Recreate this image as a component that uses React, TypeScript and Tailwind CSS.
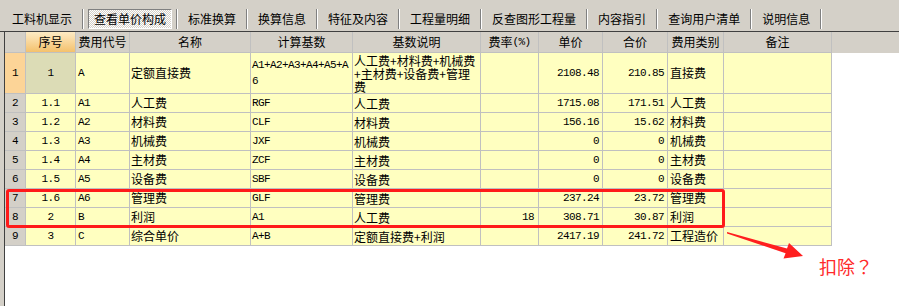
import React from "react";

const cjk = "font-['Noto_Sans_CJK_SC',sans-serif]";
const mono = "font-['Liberation_Mono',monospace] text-[11px] tracking-[-0.6px]";

const tabs = [
  "工料机显示",
  "查看单价构成",
  "标准换算",
  "换算信息",
  "特征及内容",
  "工程量明细",
  "反查图形工程量",
  "内容指引",
  "查询用户清单",
  "说明信息",
];

type Row = {
  seq: string;
  code: string;
  name: string;
  base: string[];
  desc: string[];
  rate: string;
  price: string;
  total: string;
  cat: string;
};

const rows: Row[] = [
  {
    seq: "1",
    code: "A",
    name: "定额直接费",
    base: ["A1+A2+A3+A4+A5+A", "6"],
    desc: ["人工费+材料费+机械费", "+主材费+设备费+管理", "费"],
    rate: "",
    price: "2108.48",
    total: "210.85",
    cat: "直接费",
  },
  { seq: "1.1", code: "A1", name: "人工费", base: ["RGF"], desc: ["人工费"], rate: "", price: "1715.08", total: "171.51", cat: "人工费" },
  { seq: "1.2", code: "A2", name: "材料费", base: ["CLF"], desc: ["材料费"], rate: "", price: "156.16", total: "15.62", cat: "材料费" },
  { seq: "1.3", code: "A3", name: "机械费", base: ["JXF"], desc: ["机械费"], rate: "", price: "0", total: "0", cat: "机械费" },
  { seq: "1.4", code: "A4", name: "主材费", base: ["ZCF"], desc: ["主材费"], rate: "", price: "0", total: "0", cat: "主材费" },
  { seq: "1.5", code: "A5", name: "设备费", base: ["SBF"], desc: ["设备费"], rate: "", price: "0", total: "0", cat: "设备费" },
  { seq: "1.6", code: "A6", name: "管理费", base: ["GLF"], desc: ["管理费"], rate: "", price: "237.24", total: "23.72", cat: "管理费" },
  { seq: "2", code: "B", name: "利润", base: ["A1"], desc: ["人工费"], rate: "18", price: "308.71", total: "30.87", cat: "利润" },
  { seq: "3", code: "C", name: "综合单价", base: ["A+B"], desc: ["定额直接费+利润"], rate: "", price: "2417.19", total: "241.72", cat: "工程造价" },
];

const cols = "grid grid-cols-[21px_50px_54px_121px_102px_128px_58px_64px_65px_56px_108px]";

function Cell({ className = "", children }: { className?: string; children?: React.ReactNode }) {
  return (
    <div className={`flex items-center overflow-hidden whitespace-nowrap border-r border-b border-[#c0c0c0] ${className}`}>
      {children}
    </div>
  );
}

function Toolbar() {
  return (
    <div className={`h-[31px] bg-[#d4d0c8] flex items-start pt-[9px] pl-[2px] text-[12px] text-black ${cjk}`}>
      {tabs.map((t, i) => (
        <React.Fragment key={t}>
          {i === 1 ? (
            <div className="h-[20px] mx-[4px] px-[5px] flex items-center border border-[#808080] border-r-white border-b-white bg-[image:repeating-conic-gradient(#ffffff_0%_25%,#d4d0c8_0%_50%)] bg-[length:2px_2px]">
              {t}
            </div>
          ) : (
            <div className="h-[20px] px-[10px] flex items-center">{t}</div>
          )}
          <div className="h-[20px] w-[2px] border-l border-[#808080] border-r border-r-white" />
        </React.Fragment>
      ))}
    </div>
  );
}

function Header() {
  const heads = ["费用代号", "名称", "计算基数", "基数说明"];
  return (
    <div className={`${cols} h-[21px] bg-[#d4d0c8] text-[12px] ${cjk}`}>
      <Cell />
      <Cell className="justify-center bg-linear-to-b from-[#fdebc4] to-[#f4c16c]">序号</Cell>
      {heads.map((h) => (
        <Cell key={h} className="justify-center">{h}</Cell>
      ))}
      <Cell className="justify-center">
        费率<span className={mono}>(%)</span>
      </Cell>
      {["单价", "合价", "费用类别", "备注"].map((h) => (
        <Cell key={h} className="justify-center">{h}</Cell>
      ))}
    </div>
  );
}

function DataRow({ row, index }: { row: Row; index: number }) {
  const first = index === 0;
  return (
    <div className={`${cols} ${first ? "h-[41px]" : "h-[19px]"} text-[12px] text-black ${cjk}`}>
      <Cell className={`justify-center ${mono} ${first ? "bg-[#fcd497]" : "bg-[#d4d0c8]"}`}>{index + 1}</Cell>
      <Cell className={`justify-center ${mono} ${first ? "bg-[#dcdcb6]" : "bg-[#ffffc0]"}`}>{row.seq}</Cell>
      <Cell className={`pl-[2px] bg-[#ffffc0] ${mono}`}>{row.code}</Cell>
      <Cell className="pl-[1px] bg-[#ffffc0]">{row.name}</Cell>
      <Cell className={`pl-[1px] bg-[#ffffc0] ${mono}`}>
        <div className="leading-[16px]">
          {row.base.map((b) => (
            <div key={b}>{b}</div>
          ))}
        </div>
      </Cell>
      <Cell className="pl-[1px] bg-[#ffffc0]">
        <div className="leading-[13px]">
          {row.desc.map((d) => (
            <div key={d}>{d}</div>
          ))}
        </div>
      </Cell>
      <Cell className={`justify-end pr-[4px] bg-[#ffffc0] ${mono}`}>{row.rate}</Cell>
      <Cell className={`justify-end pr-[3px] bg-[#ffffc0] ${mono}`}>{row.price}</Cell>
      <Cell className={`justify-end pr-[3px] bg-[#ffffc0] ${mono}`}>{row.total}</Cell>
      <Cell className="pl-[2px] bg-[#ffffc0]">{row.cat}</Cell>
      <Cell className="bg-[#ffffc0]" />
    </div>
  );
}

export default function App() {
  return (
    <div className="relative w-[899px] h-[306px] overflow-hidden bg-white">
      <Toolbar />
      <div className="h-px bg-[#404040]" />
      <div className="flex h-[274px]">
        <div className="w-[4px] bg-[#d4d0c8]" />
        <div className="w-px bg-[#404040]" />
        <div className="flex-1 bg-white">
          <Header />
          {rows.map((r, i) => (
            <DataRow key={r.seq} row={r} index={i} />
          ))}
        </div>
      </div>

      {/* red annotation box around rows 7-8 */}
      <div className="absolute left-[6px] top-[189px] w-[719px] h-[39px] border-[3px] border-[#ff1a1a] rounded-[3px]" />

      <svg className="absolute left-0 top-0" width="899" height="306" viewBox="0 0 899 306">
        <polygon
          points="727,232 787,248.5 789,243 803,256 783.5,258.5 785.6,253.3 727,233.5"
          fill="#ff1f1f"
        />
      </svg>
      <span className="absolute left-[819px] top-[257px] text-[18px] leading-none text-[#ff2a2a] font-['Noto_Sans_CJK_JP',sans-serif]">
        扣除？
      </span>
    </div>
  );
}
